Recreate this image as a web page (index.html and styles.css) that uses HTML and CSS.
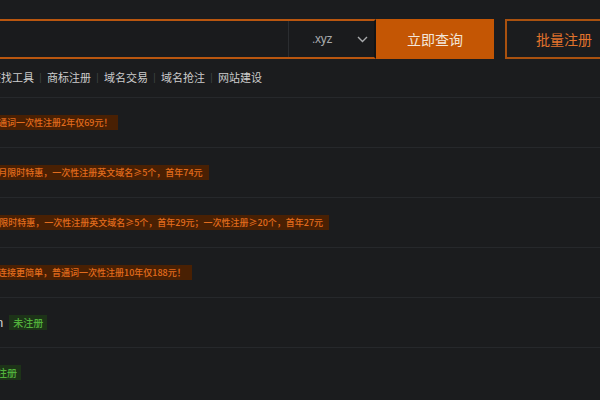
FILE: index.html
```html
<!DOCTYPE html>
<html lang="zh-CN">
<head>
<meta charset="utf-8">
<title>域名查询</title>
<link rel="stylesheet" href="styles.css">
</head>
<body>
<div class="page">
  <div class="top">
    <div class="search">
      <div class="input"></div>
      <div class="select">
        <span class="suffix">.xyz</span>
        <svg class="chev" width="11" height="7" viewBox="0 0 11 7"><path d="M1 1 L5.5 5.5 L10 1" fill="none" stroke="#a9abad" stroke-width="1.4"/></svg>
      </div>
    </div>
    <button class="go">立即查询</button>
    <button class="batch">批量注册</button>
  </div>
  <nav class="nav">
    <span class="item">查找工具</span><span class="sep">|</span>
    <span class="item">商标注册</span><span class="sep">|</span>
    <span class="item">域名交易</span><span class="sep">|</span>
    <span class="item">域名抢注</span><span class="sep">|</span>
    <span class="item">网站建设</span>
  </nav>
  <div class="rows">
    <div class="row"><div class="cell r1"><span class="promo">普通词一次性注册2年仅69元！</span></div></div>
    <div class="row"><div class="cell r2"><span class="promo">8月限时特惠，一次性注册英文域名≥5个，首年74元</span></div></div>
    <div class="row"><div class="cell r3"><span class="promo">9月限时特惠，一次性注册英文域名≥5个，首年29元；一次性注册≥20个，首年27元</span></div></div>
    <div class="row"><div class="cell r4"><span class="promo">连接更简单，普通词一次性注册10年仅188元！</span></div></div>
    <div class="row"><div class="cell r5"><span class="domain">n</span><span class="status">未注册</span></div></div>
    <div class="row"><div class="cell r6"><span class="status">未注册</span></div></div>
  </div>
</div>
</body>
</html>
```

FILE: styles.css
```css
html, body {
  margin: 0;
  padding: 0;
  overflow: hidden;
  background: #1b1c1e;
}
body {
  width: 600px;
  height: 400px;
  font-family: "Noto Sans CJK SC", "Liberation Sans", sans-serif;
  color: #cfcfcf;
}
.page {
  padding-top: 19px;
}
.top {
  display: flex;
  height: 40px;
  margin-left: -20px;
  width: 680px;
}
.search {
  display: flex;
  width: 396px;
  box-sizing: border-box;
  border: 2px solid #b9560f;
  border-right: 2px solid #121314;
  background: #1a1b1d;
}
.input {
  flex: 1;
}
.select {
  width: 86px;
  border-left: 1px solid #2b2d30;
  display: flex;
  align-items: center;
  box-sizing: border-box;
  padding-left: 23px;
}
.suffix {
  font-family: "Liberation Sans", sans-serif;
  font-size: 12px;
  color: #a9abad;
  letter-spacing: -0.3px;
}
.chev {
  margin-left: 25px;
}
.go {
  width: 118px;
  border: none;
  background: #c45604;
  color: #f3e6da;
  font-family: "Noto Sans CJK SC", sans-serif;
  font-size: 14px;
  padding: 0;
}
.batch {
  margin-left: 11px;
  width: 140px;
  box-sizing: border-box;
  border: 2px solid #a9510f;
  background: #1b1c1e;
  color: #e2742c;
  font-family: "Noto Sans CJK SC", sans-serif;
  font-size: 14px;
  text-align: left;
  padding: 0 0 0 29px;
}
.nav {
  height: 38px;
  display: flex;
  align-items: center;
  box-sizing: border-box;
  padding-bottom: 2px;
  margin-left: -10px;
  font-size: 11px;
  color: #cdcdcd;
}
.sep {
  color: #4a4c4f;
  font-size: 9px;
  width: 13px;
  text-align: center;
}
.row {
  height: 49px;
  border-top: 1px solid #26282b;
  display: flex;
  align-items: center;
}
.cell {
  display: flex;
  align-items: center;
  white-space: nowrap;
}
.promo {
  background: #492003;
  color: #e26c1d;
  font-size: 9px;
  font-weight: 500;
  line-height: 15px;
  padding: 0 6px 0 5px;
}
.domain {
  font-family: "Liberation Sans", sans-serif;
  font-size: 13px;
  color: #cfcfcf;
  margin-right: 6px;
}
.status {
  background: #1d3318;
  color: #52b23c;
  font-size: 10px;
  font-weight: 500;
  line-height: 15px;
  padding: 0 4px;
}
.r1 { margin-left: -16px; }
.r2 { margin-left: -12px; }
.r3 { margin-left: -20px; }
.r4 { margin-left: -7px; }
.r5 { margin-left: -4px; }
.r6 { margin-left: -17px; }
```
